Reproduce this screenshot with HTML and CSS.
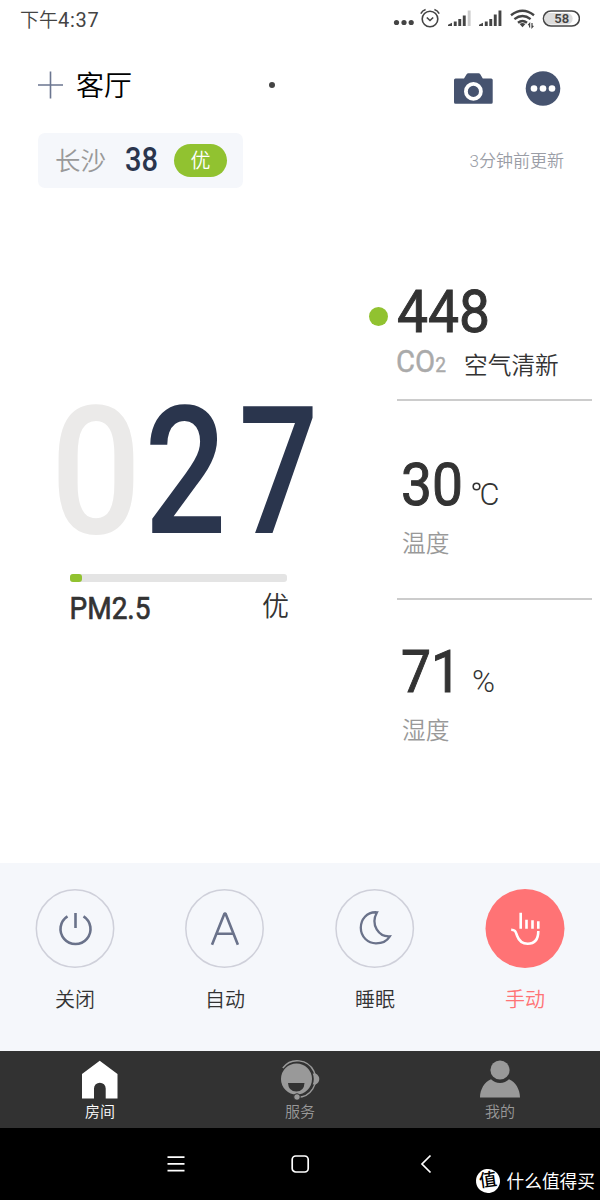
FILE: index.html
```html
<!DOCTYPE html>
<html lang="zh-CN">
<head>
    <meta charset="UTF-8">
    <meta name="viewport" content="width=device-width, initial-scale=1.0">
    <title>客厅</title>
    <link rel="stylesheet" href="styles.css">
</head>
<body>
    <div class="screen">
        <div class="status-bar">
            <span class="clock">下午<span class="clock-digits">4:37</span></span>
            <svg class="status-icons" width="190" height="24" viewBox="0 0 190 24">
                <g fill="#444">
                    <circle cx="6.5" cy="15.5" r="2.6"/>
                    <circle cx="14" cy="15.5" r="2.6"/>
                    <circle cx="21.2" cy="15.5" r="2.6"/>
                </g>
                <!-- alarm -->
                <g fill="none" stroke="#444" stroke-width="1.6">
                    <circle cx="40" cy="12" r="7.8"/>
                    <path d="M36.8 10.5l3.2 3 3.2-3M30.8 6.6q1.600-3 4.800-4M49.2 6.600q-1.600-3-4.800-4"/>
                </g>
                <!-- signal 1 -->
                <g fill="#444">
                    <path d="M58 19v-1.200l4-2v3.200zM63.800 14.500h2.900v4.500h-2.900zM68.300 12h2.900v7h-2.900zM72.800 8.500h2.900v10.500h-2.900z"/>
                    <path fill="#ccc" d="M77.700 3.500h2.900v15.500h-2.900z"/>
                </g>
                <!-- signal 2 -->
                <path fill="#444" d="M89 19v-1.200l4-2v3.200zM94.800 14.500h2.900v4.500h-2.900zM99.300 12h2.900v7h-2.900zM103.800 7.500h2.900v11.500h-2.900zM108.500 3.500h2.900v15.500h-2.900z"/>
                <!-- wifi -->
                <g fill="none" stroke="#444" stroke-width="2.4">
                    <path d="M121 8.200q11.500-9 23 0M124.400 12.100q8.100-6.400 16.200 0M128 15.700q4.500-3.600 9 0"/>
                    <path fill="#444" stroke="none" d="M129.600 17.100q2.900-2.200 5.800 0l-2.900 3.200z"/>
                    <path stroke-width="1.200" d="M139.600 20.500v-4l-1.400 1.600M142 16v4.400l1.400-1.600"/>
                </g>
                <!-- battery -->
                <path fill="#ddd" d="M155 6h22a5.700 5.700 0 0 1 0 11.400h-22z"/>
                <rect x="153.4" y="3.900" width="36" height="15.200" rx="7.600" fill="none" stroke="#444" stroke-width="1.500"/>
                <text class="battery-text" x="171.700" y="16.200" text-anchor="middle">58</text>
            </svg>
        </div>

        <div class="room-header">
            <svg class="add-icon" width="26" height="28" viewBox="0 0 26 28">
                <path d="M0 14h25M12.5 0.500v27" stroke="#6b7690" stroke-width="1.600"/>
            </svg>
            <h1>客厅</h1>
            <span class="page-dot"></span>
            <svg class="camera-icon" width="39" height="32" viewBox="0 0 39 32">
                <path fill="#46536f" d="M1.500 5.500H10L12.800 1q.5-.8 1.500-.8h10.300q1 0 1.500.8L28.800 5.500H37.200q1.500 0 1.500 1.500V29.300q0 1.500-1.500 1.500H1.500Q0 30.800 0 29.300V7q0-1.500 1.500-1.500z"/>
                <circle cx="19.400" cy="18.400" r="7.500" fill="#46536f" stroke="#fff" stroke-width="3.800"/>
            </svg>
            <svg class="more-icon" width="36" height="36" viewBox="0 0 36 36">
                <circle cx="18" cy="17.500" r="17.300" fill="#46536f"/>
                <g fill="#fff">
                    <circle cx="9" cy="17.500" r="3.300"/>
                    <circle cx="18" cy="17.500" r="3.300"/>
                    <circle cx="27" cy="17.500" r="3.300"/>
                </g>
            </svg>
        </div>

        <div class="weather-row">
            <div class="city-chip">
                <span class="city">长沙</span>
                <svg class="num" width="33" height="32"><text class="aqi" x="0" y="27.500" textLength="33" lengthAdjust="spacingAndGlyphs">38</text></svg>
                <span class="badge">优</span>
            </div>
            <span class="updated">3分钟前更新</span>
        </div>

        <div class="readings">
            <div class="pm">
                <svg class="num" width="276" height="150">
                    <g class="pm-digits">
                        <text class="leading-zero" x="0.500" y="138.500" textLength="91" lengthAdjust="spacingAndGlyphs">0</text>
                        <text x="94.500" y="139" textLength="82" lengthAdjust="spacingAndGlyphs">2</text>
                        <text x="188.500" y="139" textLength="80" lengthAdjust="spacingAndGlyphs">7</text>
                    </g>
                </svg>
                <div class="pm-bar"><div class="pm-fill" style="width: 12px"></div></div>
                <div class="pm-caption">
                    <svg class="num" width="82" height="32"><text class="pm-name" x="-0.500" y="27.500" textLength="81" lengthAdjust="spacingAndGlyphs">PM2.5</text></svg>
                    <span>优</span>
                </div>
            </div>

            <div class="side">
                <div class="metric co2">
                    <span class="level-dot"></span>
                    <svg class="num" width="100" height="54"><text class="value" x="0" y="48" textLength="93" lengthAdjust="spacingAndGlyphs">448</text></svg>
                    <div class="co2-caption">
                        <svg class="num" width="52" height="32">
                            <text class="co2-name" x="-1" y="25" textLength="50" lengthAdjust="spacingAndGlyphs">CO<tspan class="co2-sub">2</tspan></text>
                        </svg>
                        <span class="co2-state">空气清新</span>
                    </div>
                </div>
                <div class="metric">
                    <svg class="num" width="110" height="54">
                        <text class="value" x="4" y="48" textLength="62" lengthAdjust="spacingAndGlyphs">30</text>
                        <circle cx="79.500" cy="29.500" r="3.300" fill="none" stroke="#333" stroke-width="1.600"/>
                        <text class="unit" x="82.500" y="48" textLength="20" lengthAdjust="spacingAndGlyphs">C</text>
                    </svg>
                    <div class="metric-name">温度</div>
                </div>
                <div class="metric">
                    <svg class="num" width="110" height="54">
                        <text class="value" x="4" y="48" textLength="60" lengthAdjust="spacingAndGlyphs">71</text>
                        <text class="unit" x="75" y="47.500" textLength="23" lengthAdjust="spacingAndGlyphs">%</text>
                    </svg>
                    <div class="metric-name">湿度</div>
                </div>
            </div>
        </div>

        <div class="modes">
            <div class="mode">
                <svg class="mode-icon" width="80" height="80" viewBox="0 0 80 80">
                    <circle class="ring" cx="40" cy="40.500" r="38.700"/>
                    <path class="line" stroke-width="2.600" d="M40.500 25v15M32.500 28.300a15 15 0 1 0 16 0"/>
                </svg>
                <span>关闭</span>
            </div>
            <div class="mode">
                <svg class="mode-icon" width="80" height="80" viewBox="0 0 80 80">
                    <circle class="ring" cx="39.500" cy="40.500" r="38.700"/>
                    <path class="line" stroke-width="2.600" stroke-linejoin="bevel" d="M27 56.800L39.500 25.500h1L52.900 56.800M31.500 45.800h17"/>
                </svg>
                <span>自动</span>
            </div>
            <div class="mode">
                <svg class="mode-icon" width="80" height="80" viewBox="0 0 80 80">
                    <circle class="ring" cx="39.700" cy="40.500" r="38.700"/>
                    <path class="line" stroke-width="2.300" d="M42 24.300C31.500 23.500 25.800 32 25.800 39.800C25.800 49 33 55.300 41 55.300C47 55.300 52 53 54.800 48.300C44 49 35 37 42 24.300z"/>
                </svg>
                <span>睡眠</span>
            </div>
            <div class="mode active">
                <svg class="mode-icon" width="80" height="80" viewBox="0 0 80 80">
                    <circle cx="40" cy="40.500" r="39.500" fill="#ff7375"/>
                    <path fill="none" stroke="#fff" stroke-width="2.600" d="M35.700 24.700v16M41.500 31.700v9M47.500 32.200v8.500M53.300 33.200v7.500M26.200 41.700c4.500 0 4.500 2.500 6 6.300 1.800 5 6 7.700 10.500 7.700 6.500 0 10.600-4 10.600-12.700"/>
                </svg>
                <span>手动</span>
            </div>
        </div>

        <div class="tab-bar">
            <div class="tab active">
                <svg width="40" height="40" viewBox="0 0 40 40">
                    <path fill="#fff" d="M19.700 0.800L37.500 14V38.500H25.700V28.500a5.800 5.800 0 0 0-11.700 0V38.500H2V14z"/>
                </svg>
                <span>房间</span>
            </div>
            <div class="tab">
                <svg width="40" height="40" viewBox="0 0 40 40">
                    <circle cx="16.500" cy="19" r="15.500" fill="#999"/>
                    <path fill="#323232" d="M8 23h16.500q-.5 8.500-8.200 8.500T8 23z"/>
                    <path fill="none" stroke="#999" stroke-width="1.400" d="M2.800 8A18.300 18.300 0 1 1 17 37.400"/>
                    <path fill="#999" d="M35.500 13.500q3.800 2 3.800 5.500t-3.800 5.500h-2.800q2.200-5.500 0-11z"/>
                    <circle cx="17" cy="37" r="3.300" fill="#999" stroke="#323232" stroke-width="1"/>
                </svg>
                <span>服务</span>
            </div>
            <div class="tab">
                <svg width="40" height="40" viewBox="0 0 40 40">
                    <circle cx="20" cy="10" r="9.600" fill="#999"/>
                    <path fill="#999" d="M0 37.500C0 29.500 4.500 22 11 19.300q3.600 3.700 9 3.700t9-3.700C35.500 22 40 29.500 40 37.500z"/>
                </svg>
                <span>我的</span>
            </div>
        </div>

        <div class="nav-bar">
            <svg width="20" height="20" viewBox="0 0 20 20"><path d="M1.500 3.200h17M1.500 9.900h17M1.500 16.700h17"/></svg>
            <svg width="20" height="20" viewBox="0 0 20 20"><rect x="1.200" y="2" width="16" height="16" rx="3.500"/></svg>
            <svg width="20" height="20" viewBox="0 0 20 20"><path d="M14.500 1.500L6 10l8.500 8.500"/></svg>
            <div class="watermark">
                <span class="watermark-logo">值</span>
                <span>什么值得买</span>
            </div>
        </div>
    </div>
</body>
</html>
```
FILE: styles.css
```css
* {
    box-sizing: border-box;
}
body {
    margin: 0;
    font-family: Roboto, "Noto Sans CJK SC", sans-serif;
    font-weight: 350;
    color: #333;
    background-color: #fff;
}
svg {
    display: block;
    flex-shrink: 0;
}
.num {
    overflow: visible;
}
.screen {
    display: flex;
    flex-direction: column;
    width: 600px;
    height: 1200px;
    overflow: hidden;
}

/* status bar */
.status-bar {
    display: flex;
    justify-content: space-between;
    height: 40px;
    padding: 7px 20px 0;
}
.clock {
    font-size: 19px;
    line-height: 26px;
    color: #444;
}
.clock-digits {
    font-size: 20px;
    font-weight: 400;
    letter-spacing: 0.7px;
}
.battery-text {
    font-size: 13px;
    font-weight: 600;
    fill: #444;
}

/* room header */
.room-header {
    display: flex;
    height: 93px;
    padding: 31px 39px 0 38px;
}
.room-header h1 {
    margin: 0 0 0 12px;
    font-size: 28px;
    font-weight: 350;
    line-height: 31px;
    color: #000;
}
.page-dot {
    width: 6px;
    height: 6px;
    margin: 11px 0 0 137px;
    border-radius: 50%;
    background-color: #444;
}
.camera-icon {
    margin: 2px 32px 0 auto;
}

/* weather */
.weather-row {
    display: flex;
    justify-content: space-between;
    height: 55px;
    padding: 0 36px 0 38px;
}
.city-chip {
    display: flex;
    align-items: center;
    width: 205px;
    padding: 0 16px 0 17px;
    border-radius: 7px;
    background-color: #f5f7fb;
}
.city {
    margin-right: 19px;
    font-size: 25.5px;
    line-height: 30px;
    color: #999;
}
.city-chip .num {
    margin-top: -4px;
}
.aqi {
    font-size: 33px;
    font-weight: 500;
    fill: #2a354d;
}
.badge {
    width: 53px;
    height: 33px;
    margin-left: auto;
    border-radius: 17px;
    background-color: #91c230;
    font-size: 20px;
    line-height: 34px;
    text-align: center;
    color: #fff;
}
.updated {
    font-size: 17px;
    line-height: 56px;
    color: #9a9da6;
}

/* readings */
.readings {
    display: flex;
    justify-content: space-between;
    height: 675px;
    padding: 84px 8px 0 50px;
}
.pm {
    width: 276px;
    padding-top: 122px;
}
.pm-digits {
    font-size: 178px;
    font-weight: 500;
    fill: #2a354d;
}
.leading-zero {
    fill: #ebeae9;
}
.pm-bar {
    width: 217px;
    height: 8px;
    margin: 30px 0 0 20px;
    border-radius: 3px;
    background-color: #e4e4e4;
}
.pm-fill {
    height: 8px;
    border-radius: 3px;
    background-color: #91c230;
}
.pm-caption {
    display: flex;
    justify-content: space-between;
    width: 219px;
    margin: 9px 0 0 20px;
    font-size: 27px;
    line-height: 33px;
}
.pm-name {
    font-size: 32px;
    font-weight: 400;
    fill: #333;
    stroke: #333;
    stroke-width: 0.7px;
}
.side {
    width: 195px;
}
.metric {
    position: relative;
}
.metric.co2 {
    height: 127px;
    padding-top: 12px;
}
.metric + .metric {
    height: 199px;
    padding-top: 56px;
    border-top: 2px solid #ccc;
}
.metric + .metric + .metric {
    padding-top: 44px;
}
.level-dot {
    position: absolute;
    left: -28px;
    top: 35px;
    width: 19px;
    height: 19px;
    border-radius: 50%;
    background-color: #91c230;
}
.value {
    font-size: 60px;
    font-weight: 400;
    fill: #333;
    stroke: #333;
    stroke-width: 1px;
}
.unit {
    font-size: 31px;
    fill: #333;
}
.co2-caption {
    display: flex;
    margin-top: 9px;
}
.co2-name {
    font-size: 32px;
    font-weight: 400;
    fill: #aaa;
    stroke: #aaa;
    stroke-width: 0.4px;
}
.co2-sub {
    font-size: 21px;
}
.co2-state {
    margin-left: 15px;
    font-size: 23.700px;
    line-height: 38px;
}
.metric-name {
    margin: 17px 0 0 5px;
    font-size: 23.700px;
    line-height: 33px;
    color: #999;
}

/* modes */
.modes {
    display: flex;
    height: 188px;
    padding-top: 25px;
    background-color: #f5f7fb;
}
.mode {
    display: flex;
    flex: 1;
    flex-direction: column;
    align-items: center;
    gap: 18px;
    font-size: 20px;
    line-height: 28px;
}
.mode.active {
    color: #ff7375;
}
.ring {
    fill: none;
    stroke: #cfd0da;
    stroke-width: 1.500px;
}
.line {
    fill: none;
    stroke: #6a728a;
}

/* bottom tabs */
.tab-bar {
    display: flex;
    height: 77px;
    padding-top: 9px;
    background-color: #323232;
}
.tab {
    display: flex;
    flex: 1;
    flex-direction: column;
    align-items: center;
    font-size: 15px;
    line-height: 24px;
    color: #999;
}
.tab.active {
    color: #fff;
}

/* system navigation */
.nav-bar {
    position: relative;
    display: flex;
    justify-content: space-between;
    height: 72px;
    padding: 26px 164px 0 166px;
    background-color: #000;
}
.nav-bar svg {
    fill: none;
    stroke: #fff;
    stroke-width: 1.700px;
}
.watermark {
    position: absolute;
    right: 5px;
    bottom: 5px;
    display: flex;
    gap: 7px;
    font-size: 17.700px;
    font-weight: 400;
    line-height: 26px;
    white-space: nowrap;
    color: #fff;
}
.watermark-logo {
    width: 24px;
    height: 24px;
    border-radius: 50%;
    background-color: #fff;
    font-weight: 500;
    line-height: 23px;
    text-align: center;
    color: #000;
    transform: rotate(-8deg);
}
```
